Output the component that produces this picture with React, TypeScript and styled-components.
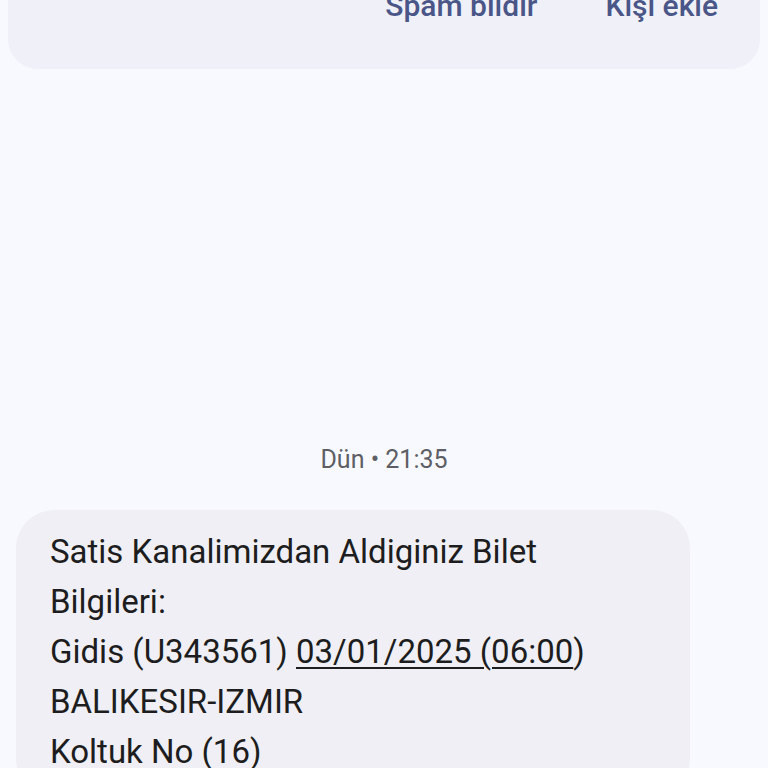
import React from "react";
import styled, { createGlobalStyle } from "styled-components";

const GlobalStyle = createGlobalStyle`
  html, body {
    margin: 0;
    padding: 0;
    background: #f8f9fe;
  }
  body {
    font-family: Roboto, "Noto Sans", "Liberation Sans", sans-serif;
    overflow: hidden;
  }
`;

const lines = [
  { id: 1, parts: [{ text: "Satis Kanalimizdan Aldiginiz Bilet" }] },
  { id: 2, parts: [{ text: "Bilgileri:" }] },
  {
    id: 3,
    parts: [
      { text: "Gidis (U343561) " },
      { text: "03/01/2025 (06:00", link: true },
      { text: ")" },
    ],
  },
  { id: 4, parts: [{ text: "BALIKESIR-IZMIR" }] },
  { id: 5, parts: [{ text: "Koltuk No (16)" }] },
];

function App() {
  return (
    <>
      <GlobalStyle />
      <StPage>
        <StSenderCard>
          <StActionButton>Spam bildir</StActionButton>
          <StActionButton>Kişi ekle</StActionButton>
        </StSenderCard>
        <StTimestamp>Dün • 21:35</StTimestamp>
        <StBubble>
          {lines.map(({ id, parts }) => (
            <StLine key={id}>
              {parts.map((p, i) =>
                p.link ? <StLink key={i}>{p.text}</StLink> : <span key={i}>{p.text}</span>
              )}
            </StLine>
          ))}
        </StBubble>
      </StPage>
    </>
  );
}

export default App;

const StPage = styled.div`
  display: flex;
  flex-direction: column;
  width: 768px;
  height: 768px;
  overflow: hidden;
  background: #f8f9fe;
`;

const StSenderCard = styled.div`
  display: flex;
  flex-shrink: 0;
  justify-content: flex-end;
  align-items: flex-end;
  gap: 68px;
  box-sizing: border-box;
  height: 109px;
  margin: -40px 8px 0 8px;
  padding: 0 42px 45px 0;
  background: #f0f1f8;
  border-radius: 0 0 30px 30px;
`;

const StActionButton = styled.span`
  font-size: 30px;
  font-weight: 500;
  color: #4a5688;
  line-height: 36px;
`;

const StTimestamp = styled.div`
  flex-shrink: 0;
  margin-top: 376px;
  text-align: center;
  font-size: 25px;
  color: #5e5f66;
  line-height: 30px;
`;

const StBubble = styled.div`
  display: flex;
  flex-direction: column;
  flex-shrink: 0;
  width: 674px;
  box-sizing: border-box;
  margin: 35px 0 0 16px;
  padding: 17px 34px 20px 34px;
  background: #efeff5;
  border-radius: 38px;
`;

const StLine = styled.div`
  font-size: 33px;
  line-height: 50px;
  color: #1d1d20;
  white-space: nowrap;
`;

const StLink = styled.span`
  text-decoration: underline;
  text-decoration-thickness: 2px;
  text-underline-offset: 4px;
`;
